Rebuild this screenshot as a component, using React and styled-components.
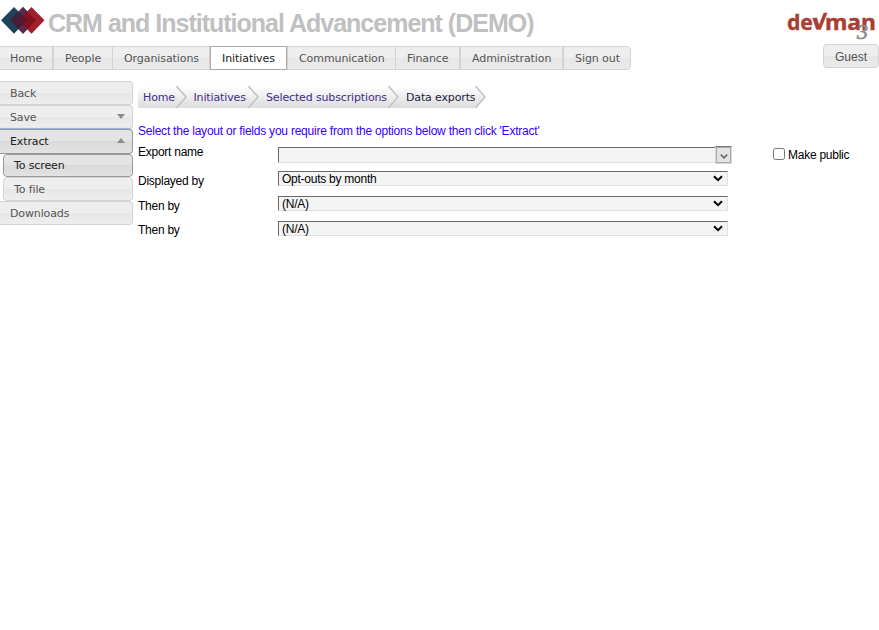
import React from "react";
import styled, { createGlobalStyle } from "styled-components";

const Global = createGlobalStyle`
  * { box-sizing: border-box; }
  body { margin: 0; background: #fff; font-family: "Liberation Sans", sans-serif; font-size: 12px; letter-spacing: -0.25px; color: #000; }
`;

const verdana = `"DejaVu Sans", Verdana, sans-serif`;

const Page = styled.div`
  width: 879px;
  height: 630px;
  overflow: hidden;
`;
const Header = styled.header`
  display: flex;
  justify-content: space-between;
  height: 46px;
`;
const Brand = styled.div`
  display: flex;
  align-items: flex-start;
`;
const BrandMark = styled.svg`
  width: 46px;
  height: 36px;
  margin-right: 2px;
`;
const Title = styled.h1`
  margin: 9px 0 0;
  font-size: 25px;
  line-height: 28px;
  font-weight: bold;
  letter-spacing: -1px;
  color: #c0c0c0;
  white-space: nowrap;
`;
const ProductLogo = styled.svg`
  width: 94px;
  height: 46px;
  letter-spacing: 0;
`;
const NavRow = styled.div`
  display: flex;
  justify-content: space-between;
  height: 35px;
`;
const Nav = styled.nav`
  display: flex;
  height: 24px;
`;
const Tab = styled.a`
  width: ${(p) => p.$w}px;
  padding-left: ${(p) => (p.$first ? 10 : 11)}px;
  border: 1px solid ${(p) => (p.$active ? "#aaa" : "#d3d3d3")};
  ${(p) => p.$first && "border-left: 0;"}
  ${(p) => p.$last && "border-radius: 0 4px 4px 0;"}
  background: ${(p) => (p.$active ? "#fff" : "linear-gradient(#eeeeee 50%, #e6e6e6 50%, #ebebeb)")};
  color: ${(p) => (p.$active ? "#212121" : "#555")};
  font: 11px/23px ${verdana};
  letter-spacing: -0.08px;
  white-space: nowrap;
`;
const GuestButton = styled.button`
  width: 56px;
  height: 24px;
  margin-top: -2px;
  padding: 2px 0 0;
  border: 1px solid #d3d3d3;
  border-radius: 4px;
  background: linear-gradient(#eeeeee 50%, #e6e6e6 50%, #ebebeb);
  color: #555;
  font: 12px/20px "Liberation Sans", sans-serif;
`;
const Body = styled.div`
  display: flex;
  align-items: flex-start;
`;
const Sidebar = styled.aside`
  width: 133px;
  display: flex;
  flex-direction: column;
  align-items: flex-end;
`;
const SideItem = styled.a`
  display: flex;
  align-items: center;
  justify-content: space-between;
  width: ${(p) => (p.$sub ? 130 : 133)}px;
  height: ${(p) => p.$h || 24}px;
  padding: 1px 7px 0 10px;
  border: 1px solid ${(p) => (p.$active ? "#999" : "#d3d3d3")};
  ${(p) => !p.$sub && "border-left: 0;"}
  border-radius: ${(p) => (p.$sub ? "4px" : "0 4px 4px 0")};
  background: ${(p) =>
    p.$active ? "linear-gradient(#e4e4e4 50%, #dadada 50%, #e2e2e2)" : "linear-gradient(#eeeeee 50%, #e6e6e6 50%, #eeeeee)"};
  color: ${(p) => (p.$active ? "#212121" : "#555")};
  font: 11px/20px ${verdana};
  letter-spacing: -0.12px;
  ${(p) => p.$focus && "padding-top: 0; box-shadow: -1px -1px 1px #8db1dd;"}
`;
const Caret = styled.svg`
  width: 8px;
  height: 5px;
  margin-top: -2px;
  fill: #8c8c8c;
`;
const Main = styled.main`
  flex: 1;
  padding: 5px 0 0 5px;
`;
const Crumbs = styled.div`
  display: flex;
  height: 22px;
`;
const Crumb = styled.a`
  display: flex;
  flex: none;
  justify-content: space-between;
  width: ${(p) => p.$w}px;
  padding-left: ${(p) => p.$pad}px;
  background: linear-gradient(#fff, #dcdcdc) 0 0 / ${(p) => (p.$last ? "calc(100% - 11px)" : "100%")} 100% no-repeat;
  color: ${(p) => (p.$last ? "#1d2242" : "#432b91")};
  font: 11px/23px ${verdana};
  letter-spacing: -0.14px;
  white-space: nowrap;
`;
const Arrow = styled.svg`
  width: 11px;
  height: 22px;
  flex: none;
  margin-left: -4px;
`;
const Intro = styled.p`
  margin: 16px 0 0;
  line-height: 14px;
  letter-spacing: -0.225px;
  color: #3300ff;
`;
const Row = styled.div`
  display: flex;
  align-items: flex-start;
  height: ${(p) => p.$h}px;
`;
const Label = styled.label`
  width: 140px;
  margin-top: ${(p) => p.$top}px;
  line-height: 14px;
`;
const Combo = styled.div`
  display: flex;
  width: 454px;
  height: 19px;
  margin-top: 8px;
`;
const ComboInput = styled.input`
  width: 438px;
  height: 16px;
  margin: 1px 0 0;
  padding: 0 3px;
  border: 1px solid #e0e0e0;
  border-top-color: #696969;
  border-left-color: #696969;
  background: #f4f4f4;
`;
const ComboButton = styled.button`
  display: flex;
  align-items: center;
  justify-content: center;
  width: 17px;
  height: 18px;
  margin-left: -1px;
  padding: 2px 0 0;
  border: 1px solid #d8d8d8;
  border-top-color: #777;
  box-shadow: inset 0 0 0 1px #aaa;
  background: #e3e3e3;
`;
const Select = styled.div`
  display: flex;
  align-items: center;
  justify-content: space-between;
  width: 450px;
  height: 15px;
  padding: 1px 4px 0 3px;
  border: 1px solid #e0e0e0;
  border-top-color: #696969;
  border-left-color: #696969;
  background: #f4f4f4;
  line-height: 14px;
`;
const Chevron = styled.svg`
  width: ${(p) => (p.$small ? 8 : 10)}px;
  height: 7px;
  margin-top: ${(p) => (p.$small ? 0 : -2)}px;
  fill: none;
  stroke: ${(p) => (p.$small ? "#666" : "#000")};
  stroke-width: 2;
`;
const Public = styled.label`
  display: flex;
  align-items: center;
  margin: 9px 0 0 41px;
  line-height: 16px;
`;
const Check = styled.input`
  width: 12px;
  height: 12px;
  margin: 0 3px 2px 0;
`;
const TabSlot = styled.div`
  display: flex;
  margin-right: ${(p) => p.$gap}px;
`;

const tabs = [
  ["Home", 53],
  ["People", 60],
  ["Organisations", 98],
  ["Initiatives", 77],
  ["Communication", 109],
  ["Finance", 65],
  ["Administration", 103],
  ["Sign out", 68],
];

const crumbs = [
  ["Home", 49, 5],
  ["Initiatives", 72, 6.5],
  ["Selected subscriptions", 140, 7],
  ["Data exports", 87, 7],
];

const Down = ({ small }) => (
  <Chevron $small={small} viewBox="0 0 10 7">
    <path d="M1 1.2 5 5.2 9 1.2" />
  </Chevron>
);

export default function App() {
  return (
    <Page>
      <Global />
      <Header>
        <Brand>
          <BrandMark viewBox="0 0 46 36">
            <path d="M14 7 27 20.3 14 33.7 1 20.3Z" fill="#1f435b" />
            <path d="M23 7 36 20.3 23 33.7 10 20.3Z" fill="#552c49" />
            <path d="M31.5 7 44.5 20.3 31.5 33.7 18.5 20.3Z" fill="#9f202c" />
            <path d="M23 7 27.3 11.4 18.5 20.3 27.3 29.2 23 33.7 10 20.3Z" fill="#552c49" />
            <path d="M18.5 11.6 27 20.3 18.5 29 10 20.3Z" fill="#402139" />
            <path d="M27.3 11.4 36 20.3 27.3 29.2 18.5 20.3Z" fill="#84101e" />
            <path d="M22.8 16 27 20.3 22.8 24.6 18.5 20.3Z" fill="#61152a" />
          </BrandMark>
          <Title>CRM and Institutional Advancement (DEMO)</Title>
        </Brand>
        <ProductLogo viewBox="0 0 94 46">
          <g fontFamily="'Noto Sans', sans-serif" fontWeight="700" fontSize="22" fill="#a83e34" stroke="#a83e34" strokeWidth=".4">
            <text x="2" y="29.5" textLength="26" lengthAdjust="spacingAndGlyphs">de</text>
            <path d="M27.5 18h4.3l2.2 7.3L38.8 13h3.4l-6.6 16.5h-4.2z" />
            <text x="40" y="29.5" textLength="51" lengthAdjust="spacingAndGlyphs">man</text>
          </g>
          <text x="72" y="39" fontFamily="'Liberation Serif', serif" fontStyle="italic" fontSize="22" fill="#8d8d8d" stroke="#8d8d8d" strokeWidth=".7">3</text>
        </ProductLogo>
      </Header>
      <NavRow>
        <Nav>
          {tabs.map(([t, w], i) => (
            <TabSlot key={t} $gap={i === 1 || i === 4 ? -1 : 0}>
              <Tab $w={w} $first={i === 0} $last={i === 7} $active={i === 3}>{t}</Tab>
            </TabSlot>
          ))}
        </Nav>
        <GuestButton>Guest</GuestButton>
      </NavRow>
      <Body>
        <Sidebar>
          <SideItem>Back</SideItem>
          <SideItem>Save<Caret viewBox="0 0 8 5"><path d="M0 0h8L4 5z" /></Caret></SideItem>
          <SideItem $active $focus $h={25}>Extract<Caret viewBox="0 0 8 5"><path d="M0 5h8L4 0z" /></Caret></SideItem>
          <SideItem $sub $active $h={23}>To screen</SideItem>
          <SideItem $sub>To file</SideItem>
          <SideItem>Downloads</SideItem>
        </Sidebar>
        <Main>
          <Crumbs>
            {crumbs.map(([t, w, pad], i) => (
              <Crumb key={t} $w={w} $pad={pad} $last={i === 3}>
                {t}
                <Arrow viewBox="0 0 11 22">
                  {i === 3 && (
                    <>
                      <defs>
                        <linearGradient id="tip" x1="0" y1="0" x2="0" y2="1">
                          <stop offset="0" stopColor="#fff" />
                          <stop offset="1" stopColor="#dcdcdc" />
                        </linearGradient>
                      </defs>
                      <path d="M0 0 10 11 0 22z" fill="url(#tip)" />
                    </>
                  )}
                  <path d="M.5 0 10 11 .5 22" fill="none" stroke="#c4c4c4" strokeWidth="1.6" />
                </Arrow>
              </Crumb>
            ))}
          </Crumbs>
          <Intro>Select the layout or fields you require from the options below then click 'Extract'</Intro>
          <Row $h={33}>
            <Label $top={7}>Export name</Label>
            <Combo>
              <ComboInput />
              <ComboButton><Down small /></ComboButton>
            </Combo>
            <Public><Check type="checkbox" />Make public</Public>
          </Row>
          <Row $h={25}>
            <Label $top={3}>Displayed by</Label>
            <Select>Opt-outs by month<Down /></Select>
          </Row>
          <Row $h={25}>
            <Label $top={3}>Then by</Label>
            <Select>(N/A)<Down /></Select>
          </Row>
          <Row $h={25}>
            <Label $top={2}>Then by</Label>
            <Select>(N/A)<Down /></Select>
          </Row>
        </Main>
      </Body>
    </Page>
  );
}
